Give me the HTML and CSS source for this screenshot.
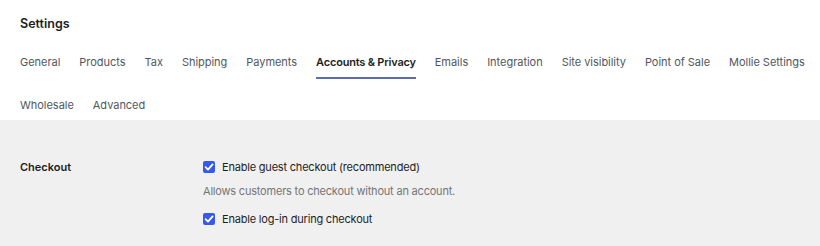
FILE: index.html
```
<!DOCTYPE html>
<html>
<head>
<meta charset="utf-8">
<link rel="stylesheet" href="styles.css">
</head>
<body>
<div class="header">
  <h1 class="title">Settings</h1>
  <nav class="tabs">
    <span class="tab">General</span>
    <span class="tab">Products</span>
    <span class="tab">Tax</span>
    <span class="tab">Shipping</span>
    <span class="tab">Payments</span>
    <span class="tab active">Accounts &amp; Privacy</span>
    <span class="tab">Emails</span>
    <span class="tab">Integration</span>
    <span class="tab">Site visibility</span>
    <span class="tab">Point of Sale</span>
    <span class="tab">Mollie Settings</span>
    <span class="tab">Wholesale</span>
    <span class="tab">Advanced</span>
  </nav>
</div>
<div class="content">
  <div class="row">
    <div class="label">Checkout</div>
    <div class="fields">
      <label class="check"><span class="box"><svg viewBox="0 0 12 12" width="12" height="12"><path d="M2.6 6.2 L5 8.6 L9.6 3.4" fill="none" stroke="#fff" stroke-width="1.8" stroke-linecap="round" stroke-linejoin="round"/></svg></span>Enable guest checkout (recommended)</label>
      <p class="desc">Allows customers to checkout without an account.</p>
      <label class="check"><span class="box"><svg viewBox="0 0 12 12" width="12" height="12"><path d="M2.6 6.2 L5 8.6 L9.6 3.4" fill="none" stroke="#fff" stroke-width="1.8" stroke-linecap="round" stroke-linejoin="round"/></svg></span>Enable log-in during checkout</label>
    </div>
  </div>
</div>
</body>
</html>
```
FILE: styles.css
```
html, body {
  margin: 0;
  padding: 0;
}
body {
  font-family: Inter, "Liberation Sans", sans-serif;
  font-size: 11px;
  color: #1e1e1e;
  background: #f0f0f1;
  width: 820px;
  height: 246px;
  overflow: hidden;
}
.header {
  background: #fff;
  padding: 0 20px;
  height: 120px;
  box-sizing: border-box;
}
.title {
  margin: 0;
  padding-top: 16px;
  font-size: 12.5px;
  font-weight: 600;
  line-height: 16px;
  color: #1e1e1e;
}
.tabs {
  display: flex;
  flex-wrap: wrap;
  column-gap: 19px;
  margin-top: 13px;
  width: 790px;
}
.tab {
  height: 43px;
  line-height: 34px;
  box-sizing: border-box;
  color: #50575e;
  white-space: nowrap;
  letter-spacing: -0.03px;
}
.tab.active {
  color: #1e1e1e;
  font-weight: 600;
  letter-spacing: -0.2px;
  position: relative;
}
.tab.active::after {
  content: "";
  position: absolute;
  left: 0;
  right: 0;
  top: 32px;
  height: 2px;
  background: #5a6eb5;
}
.content {
  padding: 39px 20px 0;
}
.row {
  display: flex;
}
.label {
  width: 183px;
  font-weight: 600;
  line-height: 16px;
  color: #1e1e1e;
}
.fields {
  display: flex;
  flex-direction: column;
}
.check {
  display: flex;
  align-items: center;
  gap: 7px;
  line-height: 16px;
  color: #1e1e1e;
  letter-spacing: -0.2px;
}
.box {
  width: 12px;
  height: 12px;
  border-radius: 2px;
  background: #3858e9;
  display: flex;
}
.desc {
  margin: 8px 0 12px;
  line-height: 16px;
  color: #757575;
  letter-spacing: -0.2px;
}
```
